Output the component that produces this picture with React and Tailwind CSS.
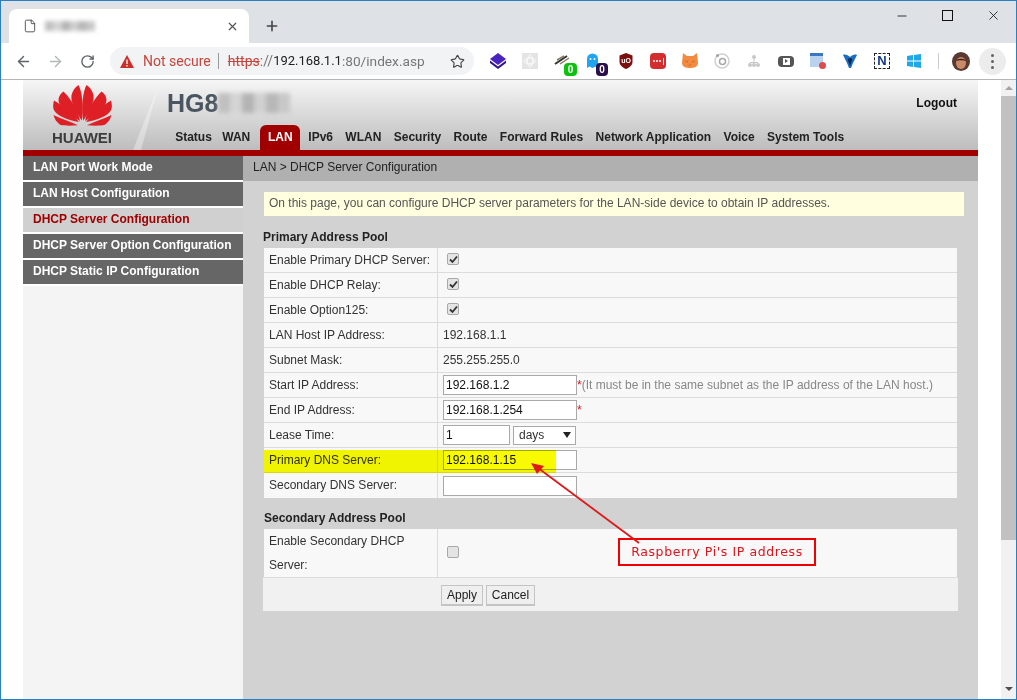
import { ArrowLeft, ArrowRight, RotateCw, Star, X, Plus, File, Minus } from "lucide-react";

const navItems = ["Status", "WAN", "LAN", "IPv6", "WLAN", "Security", "Route", "Forward Rules", "Network Application", "Voice", "System Tools"];
const sideItems = ["LAN Port Work Mode", "LAN Host Configuration", "DHCP Server Configuration", "DHCP Server Option Configuration", "DHCP Static IP Configuration"];
const petals = [
  "M28.800 33C22 24 17.500 16 18.500 9.500c1-4.500 4-7.500 7-9.500 3.500 6 5.500 20 3.300 33z",
  "M27 33.500C15 27 6 21 5.500 14.500c0-4 2.500-7 5-8.500 7 6 14.500 18 16.500 27.500z",
  "M26 34.500C15 32.500 4 29 1 23.500c-1.300-2.500-1-6 0-9 8.500 4.500 20 13.500 25 20z",
  "M25 37.500c-7 .5-14 .5-18-.5-3-2-5.500-5-6.500-9 7.500 3.500 17.500 6.500 24.500 9.500z",
];

function HuaweiMark() {
  return (
    <svg width="59" height="43" viewBox="0 0 59 40" preserveAspectRatio="none" fill="#df1f26">
      {petals.map((d) => <path key={d} d={d} />)}
      <g transform="translate(59 0) scale(-1 1)">
        {petals.map((d) => <path key={d} d={d} />)}
      </g>
    </svg>
  );
}

function Blurred({ className }) {
  return (
    <div className={`flex blur-[2px] ${className}`}>
      <span className="flex-1 bg-[#c0c0c0]" />
      <span className="flex-1 bg-[#d4d4d4]" />
      <span className="flex-1 bg-[#b4b4b4]" />
      <span className="flex-1 bg-[#d0d0d0]" />
      <span className="flex-1 bg-[#b8b8b8]" />
      <span className="flex-1 bg-[#c8c8c8]" />
    </div>
  );
}

function ExtIcons() {
  return (
    <div className="flex items-center gap-[16px] ml-[16px]">
      <svg width="16" height="16" viewBox="0 0 16 16"><path d="M8 0l8 6-8 6-8-6z" fill="#4a22c0" /><path d="M0 7.500V10l8 6 8-6V7.500L8 13.500z" fill="#2f138c" /></svg>
      <svg width="16" height="16" viewBox="0 0 16 16" fill="none" className="bg-[#e4e4e4]"><ellipse cx="8" cy="8" rx="6" ry="2.500" stroke="#f8f8f8" /><ellipse cx="8" cy="8" rx="2.500" ry="6" stroke="#f8f8f8" /><circle cx="8" cy="8" r="4" stroke="#f8f8f8" /></svg>
      <div className="relative w-4 h-4">
        <svg width="16" height="14" viewBox="0 0 16 14" fill="none"><path d="M1 11L13 3" stroke="#333" strokeWidth="2" /><path d="M3 7l7-4M6 11l9-6" stroke="#8a7a60" strokeWidth="1.500" /></svg>
        <span className="absolute left-[10px] top-[10px] w-[13px] h-[13px] bg-[#10c010] text-white text-[10px] leading-[13px] text-center font-bold rounded-sm">0</span>
      </div>
      <div className="relative w-4 h-4">
        <svg width="13" height="16" viewBox="0 0 13 16"><path d="M1 15V6a5.500 5.500 0 0 1 11 0v9l-2.500-1.500-3 1.500-3-1.500z" fill="#1ea4f0" /><circle cx="4.500" cy="6" r="1" fill="#fff" /><circle cx="8.500" cy="6" r="1" fill="#fff" /></svg>
        <span className="absolute left-[10px] top-[10px] w-[12px] h-[13px] bg-[#2a0f4a] text-white text-[10px] leading-[13px] text-center font-bold rounded-sm">0</span>
      </div>
      <svg width="16" height="16" viewBox="0 0 16 16"><path d="M1.500 2.500L8 0l6.500 2.500V9c0 3-3 5.500-6.500 7-3.500-1.500-6.500-4-6.500-7z" fill="#7c1010" /><text x="8" y="10" fontSize="7" fill="#fff" textAnchor="middle" fontFamily="Liberation Sans" fontWeight="700">uO</text></svg>
      <div className="w-4 h-4 bg-[#d32d2f] rounded-sm flex items-center justify-center gap-[1px]">
        <span className="w-[2px] h-[2px] bg-white rounded-full" /><span className="w-[2px] h-[2px] bg-white rounded-full" /><span className="w-[2px] h-[2px] bg-white rounded-full" /><span className="w-[1px] h-[7px] bg-white ml-[1px]" />
      </div>
      <svg width="16" height="16" viewBox="0 0 16 16" fill="none"><path d="M1 0l4 3h6l4-3 1 10c0 4-4 5-8 5s-8-1-8-5z" fill="#f28b3f" /><path d="M3.500 8l2.500 1M12.500 8L10 9M7 12h2" stroke="#c9632a" /></svg>
      <svg width="16" height="16" viewBox="0 0 16 16" fill="none"><circle cx="8" cy="8" r="7" stroke="#d0d0d0" strokeWidth="1.500" /><circle cx="8.500" cy="8.500" r="3" stroke="#a8a8a8" strokeWidth="1.500" /><circle cx="3.500" cy="2.500" r="1.500" fill="#a0a0a0" /></svg>
      <svg width="16" height="16" viewBox="0 0 16 16" fill="#c8c8c8"><circle cx="8" cy="4" r="2" /><circle cx="4" cy="12" r="2" /><circle cx="8" cy="12" r="2" /><circle cx="12" cy="12" r="2" /><rect x="7.500" y="5" width="1" height="6" /><rect x="4" y="9" width="8" height="1" /></svg>
      <div className="w-4 h-[11px] bg-[#555] rounded-sm flex items-center justify-center"><span className="w-[7px] h-[7px] bg-white flex items-center justify-center"><span className="w-0 h-0 border-y-[2px] border-y-transparent border-l-[3px] border-l-[#555]" /></span></div>
      <div className="relative w-4 h-4">
        <svg width="14" height="15" viewBox="0 0 14 15"><rect width="13" height="14" fill="#b9d3ee" /><rect width="13" height="3" fill="#3a78c2" /></svg>
        <span className="absolute left-[9px] top-[9px] w-[7px] h-[7px] rounded-full bg-[#e04a4a]" />
      </div>
      <svg width="16" height="16" viewBox="0 0 16 16"><path d="M1 2c2-1 5 0 7 2 2-2 5-3 7-2l-4 8-2 5H7l-2-5z" fill="#1c6fc0" /><path d="M8 5l2.500 1L8 13 5.500 6z" fill="#0d2a55" /></svg>
      <div className="relative w-4 h-4 border border-dashed border-[#222] flex items-center justify-center text-[#123a80] text-[13px] font-bold font-['Liberation_Sans']">N</div>
      <svg width="16" height="16" viewBox="0 0 16 16" fill="#1fa8e8"><path d="M1 3l6-1v5.500H1zM8 2l7-1v6.500H8zM1 8.500h6V14l-6-1zM8 8.500h7V15l-7-1z" /></svg>
    </div>
  );
}

function Row({ label, children, tall }) {
  return (
    <div className={`flex border-b border-[#dcdcdc] last:border-b-0 ${tall ? "h-[48px]" : "h-[25px]"}`}>
      <div className="w-[174px] pl-[5px] border-r border-[#dcdcdc] shrink-0 leading-[24px]">{label}</div>
      <div className="flex-1 pl-[5px] flex items-center">{children}</div>
    </div>
  );
}

function Check({ on }) {
  return (
    <span className="ml-[4px] mb-[2px] w-[12px] h-[12px] rounded-[2px] border border-[#a8a8a8] bg-[#e4e4e4] flex items-center justify-center">
      {on && <svg width="9" height="9" viewBox="0 0 9 9"><path d="M1 4.500l2.500 2.500L8 1.500" stroke="#333" strokeWidth="1.800" fill="none" /></svg>}
    </span>
  );
}

function Box({ w = "w-[134px]", value }) {
  return <div className={`${w} h-[20px] border border-[#a9a9a9] bg-white leading-[18px] pl-[2px] text-[12px] text-[#111]`}>{value}</div>;
}

export default function App() {
  return (
    <div className="relative w-[1017px] h-[700px] overflow-hidden bg-white font-['Liberation_Sans',sans-serif] text-[12px] text-[#333] border border-[#2b7fc0]">
      {/* tab strip */}
      <div className="h-[42px] bg-[#dee1e6] flex items-end pl-[8px]">
        <div className="w-[240px] h-[34px] bg-white rounded-t-lg flex items-center pl-[14px] pr-[10px]">
          <File size={14} strokeWidth={1.500} className="text-[#444]" />
          <Blurred className="ml-[8px] w-[50px] h-[10px]" />
          <X size={13} strokeWidth={2.200} className="ml-auto text-[#555]" />
        </div>
        <Plus size={16} strokeWidth={2.400} className="ml-[15px] mb-[9px] text-[#444]" />
        <div className="ml-auto self-start flex items-center gap-[33px] pt-[7px] pr-[15px] text-[#111]">
          <Minus size={14} strokeWidth={1.400} />
          <span className="w-[11px] h-[11px] border border-[#111]" />
          <X size={15} strokeWidth={1.300} />
        </div>
      </div>
      {/* toolbar */}
      <div className="h-[37px] bg-white flex items-center border-b border-[#b5b5b5]">
        <ArrowLeft size={17} strokeWidth={2} className="ml-[14px] text-[#5f6368]" />
        <ArrowRight size={17} strokeWidth={2} className="ml-[15px] text-[#b4b6b8]" />
        <RotateCw size={15} strokeWidth={2.200} className="ml-[16px] text-[#5f6368]" />
        <div className="ml-[15px] h-[28px] w-[364px] bg-[#f1f3f4] rounded-full flex items-center pl-[10px] pr-[9px] text-[14px] font-['Roboto',sans-serif]">
          <svg width="14" height="13" viewBox="0 0 14 13"><path d="M7 0l7 13H0z" fill="#c9302a" /><path d="M7 4.500v4.500M7 10v1.500" stroke="#fff" strokeWidth="1.300" /></svg>
          <span className="ml-[9px] text-[#c5463c]">Not secure</span>
          <span className="mx-[7px] h-[16px] w-px bg-[#999]" />
          <span className="ml-[2px] text-[#c5463c] line-through">https</span>
          <span className="text-[#777]">://</span>
          <span className="text-[#222] text-[13px]">192.168.1.1</span>
          <span className="text-[#777] text-[13.700px]">:80/index.asp</span>
          <Star size={15} strokeWidth={1.800} className="ml-auto text-[#444]" />
        </div>
        <ExtIcons />
        <span className="ml-[16px] h-[16px] w-px bg-[#ccc]" />
        <svg className="ml-[13px]" width="18" height="19" viewBox="0 0 18 19">
          <ellipse cx="9" cy="9.500" rx="9" ry="9.500" fill="#5a3a30" />
          <ellipse cx="9" cy="11" rx="5" ry="6" fill="#c98a68" />
          <path d="M4 9c1-3 9-3 10 0-2-1-8-1-10 0z" fill="#3a2018" />
        </svg>
        <div className="ml-[9px] w-[27px] h-[27px] rounded-full bg-[#ececec] flex flex-col items-center justify-center gap-[3px]">
          <span className="w-[3px] h-[3px] rounded-full bg-[#5f6368]" />
          <span className="w-[3px] h-[3px] rounded-full bg-[#5f6368]" />
          <span className="w-[3px] h-[3px] rounded-full bg-[#5f6368]" />
        </div>
      </div>

      {/* page */}
      <div className="flex h-[619px]">
        <div className="w-[22px] shrink-0" />
        <div className="w-[955px] shrink-0 flex flex-col">
          <div className="relative h-[70px] bg-gradient-to-b from-[#f6f6f6] to-[#bdbdbd]">
            <svg className="absolute left-0 top-0" width="140" height="70"><path d="M135 7L118 70H110z" fill="#fff" opacity="0.35" /></svg>
            <div className="absolute left-[29px] top-[5px] flex flex-col items-center">
              <HuaweiMark />
              <span className="text-[15px] font-bold text-[#3c3c3c] leading-[18px] mt-[1px]">HUAWEI</span>
            </div>
            <div className="absolute left-[144px] top-[8px] flex items-center">
              <span className="text-[25px] font-bold text-[#4a5560] leading-[30px]">HG8</span>
              <Blurred className="w-[72px] h-[20px]" />
            </div>
            <div className="absolute right-[21px] top-[14px] font-bold text-[12px] text-[#111]">Logout</div>
            <div className="absolute left-[146px] bottom-0 h-[27px] flex items-end text-[12px] font-bold text-[#222]">
              {navItems.map((item) => {
                if (item === "LAN") {
                  return <span key={item} className="h-[25px] px-[7.500px] ml-[2px] mr-[2px] rounded-t-md bg-[#a00000] text-white leading-[24px]">{item}</span>;
                }
                return <span key={item} className={`leading-[26px] px-[6.200px] ${item === "WAN" ? "-ml-[2px] mr-[2px]" : ""}`}>{item}</span>;
              })}
            </div>
          </div>
          <div className="h-[6px] bg-[#a00000]" />
          <div className="flex flex-1">
            <div className="w-[220px] bg-[#f4f4f4] shrink-0 flex flex-col">
              {sideItems.map((item) => (
                <div key={item} className={`h-[26px] leading-[23px] pl-[10px] font-bold border-b-2 border-white ${item === "DHCP Server Configuration" ? "bg-[#d0d0d0] text-[#a00000]" : "bg-[#666666] text-white"}`}>{item}</div>
              ))}
            </div>
            <div className="flex-1 bg-[#d2d2d2]">
              <div className="h-[25px] bg-[#b0b0b0] leading-[23px] pl-[10px] text-[#222]">LAN &gt; DHCP Server Configuration</div>
              <div className="ml-[21px] mt-[11px] w-[700px] h-[24px] bg-[#ffffe0] leading-[23px] pl-[5px] text-[#555]">On this page, you can configure DHCP server parameters for the LAN-side device to obtain IP addresses.</div>
              <div className="ml-[20px] mt-[12px] font-bold text-[#222] h-[20px] leading-[18px]">Primary Address Pool</div>
              <div className="ml-[21px] w-[693px] bg-[#f8f8f8] text-[#333]">
                <Row label="Enable Primary DHCP Server:"><Check on /></Row>
                <Row label="Enable DHCP Relay:"><Check on /></Row>
                <Row label="Enable Option125:"><Check on /></Row>
                <Row label="LAN Host IP Address:"><span>192.168.1.1</span></Row>
                <Row label="Subnet Mask:"><span>255.255.255.0</span></Row>
                <Row label="Start IP Address:"><Box value="192.168.1.2" /><span className="text-[#888]"><span className="text-[#e0141c]">*</span>(It must be in the same subnet as the IP address of the LAN host.)</span></Row>
                <Row label="End IP Address:"><Box value="192.168.1.254" /><span className="text-[#e0141c]">*</span></Row>
                <Row label="Lease Time:">
                  <Box w="w-[67px]" value="1" />
                  <div className="ml-[3px] w-[63px] h-[19px] border border-[#a9a9a9] bg-white flex items-center justify-between pl-[5px] pr-[4px]">days <span className="w-0 h-0 border-x-[4px] border-x-transparent border-t-[6px] border-t-[#222]" /></div>
                </Row>
                <Row label="Primary DNS Server:"><Box value="192.168.1.15" /></Row>
                <Row label="Secondary DNS Server:"><Box value="" /></Row>
              </div>
              <div className="ml-[21px] mt-[10px] font-bold text-[#222] h-[21px] leading-[20px]">Secondary Address Pool</div>
              <div className="ml-[21px] w-[693px] bg-[#f8f8f8] text-[#333]">
                <Row label={<>Enable Secondary DHCP<br />Server:</>} tall><Check /></Row>
              </div>
              <div className="ml-[20px] w-[695px] h-[34px] bg-[#f1f1f1] border-t border-[#dcdcdc] flex items-center pl-[178px] pt-[1px] gap-[3px] text-[#222]">
                <button className="h-[21px] w-[42px] bg-[#efefef] border border-[#c4c4c4] border-b-2">Apply</button>
                <button className="h-[21px] w-[49px] bg-[#efefef] border border-[#c4c4c4] border-b-2">Cancel</button>
              </div>
            </div>
          </div>
        </div>
        <div className="w-[23px] shrink-0" />
        {/* scrollbar */}
        <div className="w-[15px] bg-[#f1f1f1] flex flex-col items-center">
          <span className="mt-[6px] w-0 h-0 border-x-[4px] border-x-transparent border-b-[4px] border-b-[#a3a3a3]" />
          <div className="mt-[6px] w-full h-[444px] bg-[#c1c1c1]" />
          <span className="mt-auto mb-[8px] w-0 h-0 border-x-[4px] border-x-transparent border-t-[4px] border-t-[#505050]" />
        </div>
      </div>

      {/* annotation on the screenshot */}
      <div className="absolute left-[263px] top-[449px] w-[292px] h-[23px] bg-[#f8fb00] mix-blend-multiply" />
      <div className="absolute left-[617px] top-[537px] w-[198px] h-[28px] border-2 border-[#ee0000] text-[#e0141c] text-[12.500px] tracking-[0.600px] flex items-center justify-center font-['DejaVu_Sans',sans-serif]">Raspberry Pi's IP address</div>
      <svg className="absolute left-0 top-0 pointer-events-none" width="1017" height="700" fill="none">
        <path d="M638 542L533 464" stroke="#e01818" strokeWidth="1.800" />
        <path d="M530 462l13 3-7 8z" fill="#e01818" />
      </svg>
    </div>
  );
}
